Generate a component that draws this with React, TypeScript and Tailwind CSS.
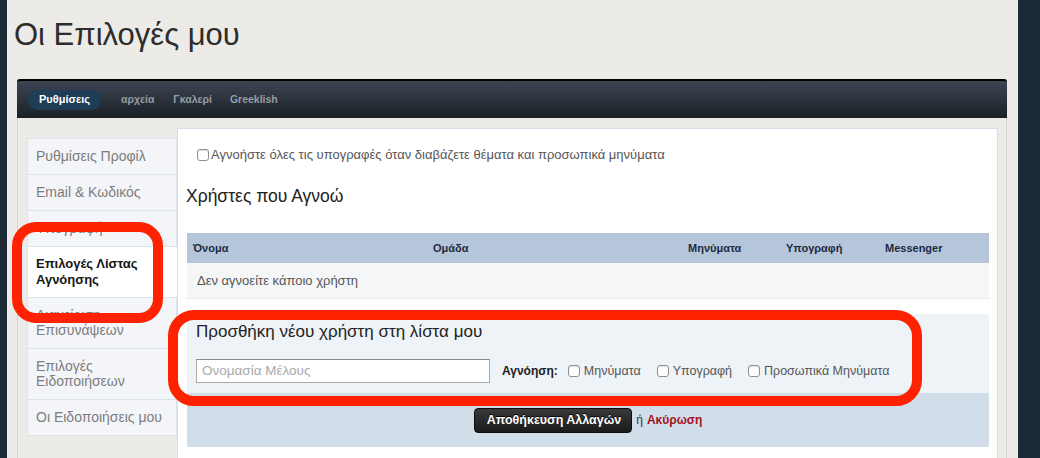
import React from "react";

const sideItems: { label: React.ReactNode; active?: boolean }[] = [
  { label: "Ρυθμίσεις Προφίλ" },
  { label: "Email & Κωδικός" },
  { label: "Υπογραφή" },
  {
    label: (
      <>
        Επιλογές Λίστας
        <br />
        Αγνόησης
      </>
    ),
    active: true,
  },
  {
    label: (
      <>
        Διαχείριση
        <br />
        Επισυνάψεων
      </>
    ),
  },
  {
    label: (
      <>
        Επιλογές
        <br />
        Ειδοποιήσεων
      </>
    ),
  },
  { label: "Οι Ειδοποιήσεις μου" },
];

function Box() {
  return (
    <span className="inline-block w-[12px] h-[12px] shrink-0 rounded-[3px] border border-[#8f8f8f] bg-white shadow-[inset_0_1px_1px_rgba(0,0,0,0.12)]" />
  );
}

function CheckItem({ label }: { label: string }) {
  return (
    <label className="flex items-center gap-[4px] text-[12.5px] text-[#555]">
      <Box />
      {label}
    </label>
  );
}

export default function App() {
  return (
    <div className="relative w-[1040px] h-[458px] overflow-hidden bg-[#1c2a38] font-['Liberation_Sans',Arial,sans-serif]">
      <div className="ml-[7px] w-[1011px] h-full bg-[#edebe7]">
        {/* Page title */}
        <div className="h-[79px] pt-[15px] pl-[7px]">
          <h1 className="text-[31px] leading-[40px] text-[#2d2d2d]">Οι Επιλογές μου</h1>
        </div>

        <div className="ml-[10px] w-[990px] h-[379px] border-x border-[#d6d4d0]">
          {/* Tabs bar */}
          <nav className="-mx-px h-[39px] rounded-t-[3px] border-t-2 border-black bg-gradient-to-b from-[#3c4653] to-[#1b2027] flex items-center pl-[11px] text-[11px] font-bold">
            <span className="h-[20px] px-[11px] rounded-full bg-[#1f3d57] text-white flex items-center">
              Ρυθμίσεις
            </span>
            <span className="ml-[20px] text-[10.5px] text-[#959ca4]">αρχεία</span>
            <span className="ml-[19px] text-[10.5px] text-[#959ca4]">Γκαλερί</span>
            <span className="ml-[18px] text-[10.5px] text-[#959ca4]">Greeklish</span>
          </nav>

          <div className="flex">
            {/* Sidebar */}
            <ul className="mt-[20px] ml-[9px] w-[150px] shrink-0">
              {sideItems.map((it, i) => (
                <li
                  key={i}
                  className={`pl-[8px] pr-[2px] border-b border-l border-[#dce3ec] whitespace-nowrap ${
                    i === 0 ? "border-t" : ""
                  } ${
                    it.active
                      ? "bg-white text-[13px] font-bold text-[#161616] leading-[16px] py-[9px]"
                      : "bg-[#f3f5f9] text-[14px] text-[#7d7d7d] border-r leading-[15px] py-[10px]"
                  }`}
                >
                  {it.label}
                </li>
              ))}
            </ul>

            {/* Main content */}
            <section className="mt-[10px] w-[821px] h-[340px] border border-[#d5e0ec] bg-white">
              <div className="pt-[19px] pl-[19px] flex items-center gap-[2px] h-[33px] text-[13px] text-[#555]">
                <Box />
                <span>Αγνοήστε όλες τις υπογραφές όταν διαβάζετε θέματα και προσωπικά μηνύματα</span>
              </div>

              <h2 className="mt-[24px] pl-[8px] text-[17.5px] leading-[20px] text-[#222]">Χρήστες που Αγνοώ</h2>

              <div className="mt-[27px] ml-[9px] w-[802px]">
                <div className="h-[30px] bg-[#b5c6da] grid grid-cols-[240px_255px_98px_99px_1fr] items-center pl-[6px] text-[11px] font-bold text-[#1d2a3e]">
                  <span>Όνομα</span>
                  <span>Ομάδα</span>
                  <span>Μηνύματα</span>
                  <span>Υπογραφή</span>
                  <span>Messenger</span>
                </div>
                <div className="h-[36px] bg-[#f5f6f8] border-b border-[#e7eaee] flex items-center pl-[10px] text-[13px] text-[#555]">
                  Δεν αγνοείτε κάποιο χρήστη
                </div>

                {/* Add user */}
                <div className="mt-[15px] h-[79px] bg-[#eef3f7] pt-[8px] pl-[9px]">
                  <h3 className="text-[17px] leading-[20px] text-[#222]">Προσθήκη νέου χρήστη στη λίστα μου</h3>
                  <div className="mt-[17px] flex items-center">
                    <div className="w-[294px] h-[24px] border border-[#aaa] border-t-[#888] bg-white flex items-center pl-[5px] text-[13.5px] text-[#a9a9a9]">
                      Ονομασία Μέλους
                    </div>
                    <span className="ml-[12px] text-[12px] font-bold text-[#222]">Αγνόηση:</span>
                    <div className="ml-[10px] flex items-center gap-[16px]">
                      <CheckItem label="Μηνύματα" />
                      <CheckItem label="Υπογραφή" />
                      <CheckItem label="Προσωπικά Μηνύματα" />
                    </div>
                  </div>
                </div>

                {/* Submit bar */}
                <div className="h-[54px] bg-[#d1dde9] flex items-center justify-center gap-[4px]">
                  <button className="h-[25px] pl-[12px] pr-[10px] rounded-[4px] border border-[#0f0f0f] bg-gradient-to-b from-[#3a3a3a] to-[#1b1b1b] text-white text-[12.5px] font-bold [text-shadow:0_-1px_0_#000]">
                    Αποθήκευση Αλλαγών
                  </button>
                  <span className="text-[12px] text-[#333]">ή</span>
                  <span className="text-[12px] font-bold text-[#a3161f]">Ακύρωση</span>
                </div>
              </div>
            </section>
          </div>
        </div>
      </div>

      {/* Annotation outlines */}
      <div className="absolute left-[12px] top-[222px] w-[151px] h-[101px] rounded-[24px] border-[10px] border-[#ff2200]" />
      <div className="absolute left-[168px] top-[310px] w-[754px] h-[96px] rounded-[26px] border-[10px] border-[#ff2200]" />
    </div>
  );
}
